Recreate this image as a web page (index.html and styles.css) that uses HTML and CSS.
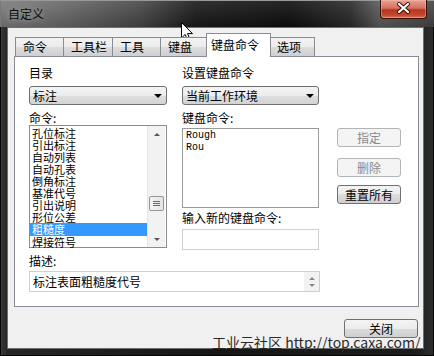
FILE: index.html
```html
<!DOCTYPE html>
<html lang="zh-CN">
<head>
<meta charset="utf-8">
<title>自定义</title>
<link rel="stylesheet" href="styles.css">
</head>
<body>
<div class="window">
  <div class="titlebar">
    <span class="title">自定义</span>
    <div class="close-x">
      <svg width="47" height="19" viewBox="0 0 47 19">
        <path d="M19 5 L28 13 M28 5 L19 13" stroke="#3a0a05" stroke-width="4" stroke-linecap="round"/>
        <path d="M19 5 L28 13 M28 5 L19 13" stroke="#ffffff" stroke-width="2.2" stroke-linecap="round"/>
      </svg>
    </div>
  </div>
  <div class="client">
    <div class="tabs">
      <div class="tab t1">命令</div>
      <div class="tab t2">工具栏</div>
      <div class="tab t3">工具</div>
      <div class="tab t4">键盘</div>
      <div class="tab active">键盘命令</div>
      <div class="tab t6">选项</div>
    </div>
    <div class="panel">
      <div class="row">
        <div class="col col-left">
          <div class="label">目录</div>
          <div class="combo"><span>标注</span><span class="drop"></span></div>
          <div class="label gap6">命令:</div>
          <div class="listbox">
            <ul class="items">
              <li>孔位标注</li>
              <li>引出标注</li>
              <li>自动列表</li>
              <li>自动孔表</li>
              <li>倒角标注</li>
              <li>基准代号</li>
              <li>引出说明</li>
              <li>形位公差</li>
              <li class="sel">粗糙度</li>
              <li>焊接符号</li>
            </ul>
            <div class="vscroll">
              <div class="sbtn"><span class="up"></span></div>
              <div class="track"><div class="thumb"><i></i><i></i><i></i></div></div>
              <div class="sbtn"><span class="down"></span></div>
            </div>
          </div>
        </div>
        <div class="col col-mid">
          <div class="label">设置键盘命令</div>
          <div class="combo"><span>当前工作环境</span><span class="drop"></span></div>
          <div class="label gap6">键盘命令:</div>
          <div class="textarea">
            <div>Rough</div>
            <div>Rou</div>
          </div>
          <div class="label gap3">输入新的键盘命令:</div>
          <div class="input"></div>
        </div>
        <div class="col col-btns">
          <div class="btn disabled b1">指定</div>
          <div class="btn disabled b2">删除</div>
          <div class="btn b3">重置所有</div>
        </div>
      </div>
      <div class="label desc-label">描述:</div>
      <div class="desc">
        <span class="desc-text">标注表面粗糙度代号</span>
        <div class="mini-scroll"><span class="up small"></span><span class="down small"></span></div>
      </div>
    </div>
    <div class="footer">
      <div class="btn close-btn">关闭</div>
    </div>
  </div>
  <div class="watermark">工业云社区 http://top.caxa.com/</div>
  <svg class="cursor" width="13" height="20" viewBox="0 0 13 20">
    <path d="M0.5 0.5 L0.5 16 L4.2 12.4 L6.8 18.6 L9 17.6 L6.5 11.6 L11.5 11.6 Z" fill="#fff" stroke="#000" stroke-width="1"/>
  </svg>
</div>
</body>
</html>
```

FILE: styles.css
```css
* { box-sizing: border-box; margin: 0; padding: 0; }
html, body { width: 434px; height: 356px; overflow: hidden; }
body {
  font-family: "Noto Sans CJK SC", "Noto Sans", sans-serif;
  font-size: 12px;
  color: #000;
  background: #000;
}
.window {
  position: relative;
  width: 434px;
  height: 356px;
  display: flex;
  flex-direction: column;
  background: linear-gradient(to right, #3c3c3c 0, #262626 7px, #161616 50%, #1c1c1c 96%, #2e2e2e 100%);
  box-shadow: inset 0 0 0 1px #050505;
}
.titlebar {
  height: 27px;
  display: flex;
  align-items: flex-start;
  padding-left: 8px;
  background:
    linear-gradient(rgba(255,255,255,0.10), rgba(0,0,0,0.15)),
    linear-gradient(to right, #7c7c7c 0, #6a6a6a 60px, #474747 140px, #1a1a1a 195px, #0e0e0e 290px, #2a2a2a 350px, #5c5c5c 380px, #444 434px);
  box-shadow: inset 0 1px 0 #999, inset 1px 0 0 #777;
}
.title {
  margin-top: 6px;
  font-size: 12px;
  line-height: 16px;
  color: #0c0c0c;
  text-shadow: 0 0 6px rgba(200,200,200,0.8);
}
.close-x {
  margin-left: auto;
  margin-right: 7px;
  width: 47px;
  height: 19px;
  border: 1px solid #3b0d08;
  border-top: none;
  border-radius: 0 0 4px 4px;
  background: linear-gradient(#e7a293 0, #d4735f 45%, #b8341d 55%, #c24a2e 85%, #d8785a 100%);
  box-shadow: inset 0 0 0 1px rgba(255,200,180,0.4);
}
.close-x svg { display: block; margin-top: -1px; margin-left: -1px; }
.client {
  flex: 1;
  margin: 0 10px 7px 7px;
  border: 1px solid #6f6f6f;
  background: #f0f0f0;
  padding: 5px 4px 0 6px;
  display: flex;
  flex-direction: column;
}
.tabs {
  display: flex;
  align-items: flex-start;
  height: 24px;
  margin-bottom: -1px;
  padding-left: 1px;
  position: relative;
  z-index: 1;
}
.tab {
  height: 19px;
  margin-top: 4px;
  margin-left: -1px;
  padding-left: 7px;
  line-height: 17px;
  border: 1px solid #898c95;
  border-bottom: none;
  background: linear-gradient(#f3f3f3, #ebebeb 50%, #dddddd 50%, #cfcfcf);
}
.tab.t1 { width: 49px; margin-left: 0; }
.tab.t2 { width: 50px; }
.tab.t3 { width: 49px; }
.tab.t4 { width: 48px; }
.tab.active {
  width: 65px;
  height: 24px;
  margin-top: 0;
  margin-left: -2px;
  padding-left: 4px;
  line-height: 21px;
  background: #fff;
  position: relative;
  z-index: 2;
}
.tab.t6 { width: 46px; margin-left: -2px; }
.panel {
  height: 251px;
  width: 405px;
  border: 1px solid #898c95;
  background: #fff;
  padding: 9px 0 0 14px;
}
.row { display: flex; align-items: flex-start; }
.col { display: flex; flex-direction: column; }
.col-left { width: 138px; }
.col-mid { width: 137px; margin-left: 15px; }
.col-btns { width: 64px; margin-left: 18px; padding-top: 62px; }
.label { height: 14px; line-height: 14px; font-size: 12px; }
.gap6 { margin-top: 6px; }
.gap3 { margin-top: 3px; }
.combo {
  margin-top: 6px;
  height: 19px;
  border: 1px solid #707070;
  border-radius: 3px;
  background: linear-gradient(#f4f4f4, #ececec 50%, #dfdfdf 50%, #d3d3d3);
  display: flex;
  align-items: center;
  padding-left: 3px;
  line-height: 17px;
}
.drop {
  margin-left: auto;
  margin-right: 4px;
  width: 0; height: 0;
  border-left: 4px solid transparent;
  border-right: 4px solid transparent;
  border-top: 4px solid #000;
}
.listbox {
  height: 123px;
  border: 1px solid #8c8c8c;
  display: flex;
  background: #fff;
}
.items { list-style: none; width: 117px; padding-top: 1px; }
.items li {
  height: 12px;
  line-height: 12px;
  padding-left: 2px;
  font-size: 11px;
  white-space: nowrap;
}
.items li.sel { background: #3399ff; color: #fff; height: 13px; line-height: 13px; }
.vscroll {
  width: 18px;
  display: flex;
  flex-direction: column;
  background: #f2f2f2;
  border-left: 1px solid #e6e6e6;
}
.sbtn { height: 16px; display: flex; align-items: center; justify-content: center; }
.track { flex: 1; }
.thumb {
  margin: 54px 1px 0 1px;
  height: 15px;
  border: 1px solid #969696;
  border-radius: 2px;
  background: linear-gradient(to right, #f4f4f4, #e4e4e4);
  display: flex;
  flex-direction: column;
  align-items: center;
  justify-content: center;
  gap: 1px;
}
.thumb i { display: block; width: 7px; height: 1px; background: #6a6a6a; }
.up, .down {
  width: 0; height: 0;
  border-left: 3px solid transparent;
  border-right: 3px solid transparent;
}
.up { border-bottom: 3px solid #555; }
.down { border-top: 3px solid #555; }
.up.small { border-bottom-color: #888; }
.down.small { border-top-color: #888; }
.textarea {
  margin-top: 3px;
  height: 80px;
  border: 1px solid #9a9a9a;
  background: #fff;
  padding: 1px 0 0 3px;
  font-family: "Liberation Mono", "Courier New", monospace;
  font-size: 10px;
  line-height: 12px;
}
.input {
  margin-top: 4px;
  height: 21px;
  border: 1px solid #cfcfcf;
  background: #fff;
}
.btn {
  height: 19px;
  border: 1px solid #707070;
  border-radius: 3px;
  background: linear-gradient(#f4f4f4, #ececec 50%, #dddddd 50%, #cfcfcf);
  text-align: center;
  line-height: 17px;
  font-size: 12px;
}
.btn.disabled {
  border-color: #b2b5b8;
  background: #f4f4f4;
  color: #8a8a8a;
}
.b2 { margin-top: 11px; }
.b3 { margin-top: 8px; }
.desc-label { margin-top: 4px; }
.desc {
  margin-top: 3px;
  width: 291px;
  height: 21px;
  border: 1px solid #cfcfcf;
  background: #fff;
  display: flex;
  align-items: center;
  padding-left: 3px;
}
.desc-text { line-height: 14px; }
.mini-scroll {
  margin-left: auto;
  width: 15px;
  height: 100%;
  background: #f2f2f2;
  display: flex;
  flex-direction: column;
  align-items: center;
  justify-content: center;
  gap: 4px;
}
.footer {
  display: flex;
  justify-content: flex-end;
  margin-top: 12px;
  padding-right: 1px;
}
.close-btn { width: 74px; }
.watermark {
  position: absolute;
  left: 212px;
  top: 336px;
  font-family: "Noto Sans CJK SC", "Liberation Sans", sans-serif;
  font-size: 14px;
  line-height: 13px;
  color: #2a2a2a;
  white-space: nowrap;
}
.cursor { position: absolute; left: 181px; top: 22px; }
```
